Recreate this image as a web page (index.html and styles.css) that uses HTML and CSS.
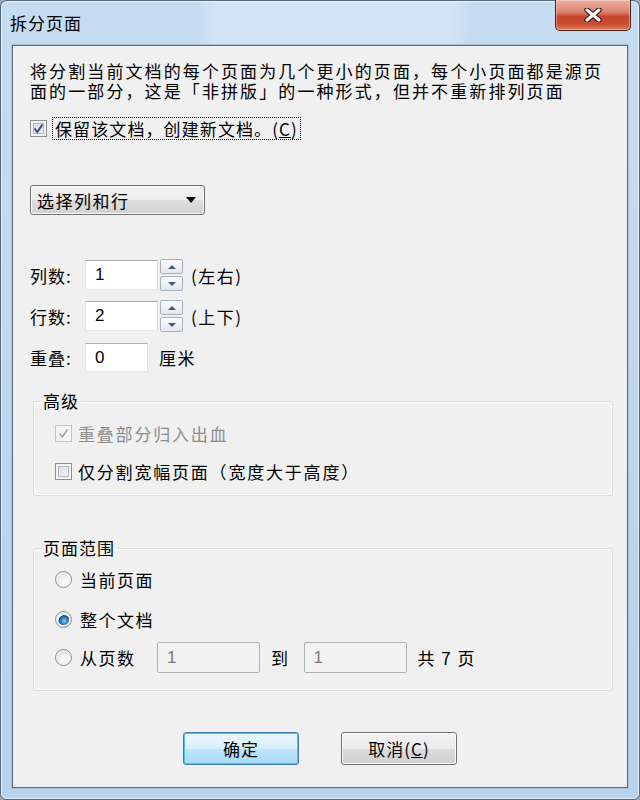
FILE: index.html
```html
<!DOCTYPE html>
<html lang="zh-CN">
<head>
    <meta charset="UTF-8">
    <meta name="viewport" content="width=device-width, initial-scale=1.0">
    <title>拆分页面</title>
    <link rel="stylesheet" href="styles.css">
</head>
<body>

<div class="window">

    <!-- Title bar -->
    <div class="titlebar">
        <span class="title">拆分页面</span>
        <button class="close" title="关闭">
            <svg width="20" height="14" viewBox="0 0 20 14">
                <path d="M4 2 L16 12 M16 2 L4 12" stroke="#3b1d14" stroke-width="5.5" stroke-linecap="round"/>
                <path d="M4 2 L16 12 M16 2 L4 12" stroke="#ffffff" stroke-width="3" stroke-linecap="round"/>
            </svg>
        </button>
    </div>

    <div class="frame">
        <div class="client">

            <p class="intro">将分割当前文档的每个页面为几个更小的页面，每个小页面都是源页<br>面的一部分，这是「非拼版」的一种形式，但并不重新排列页面</p>

            <label class="check keep">
                <span class="box"><svg width="11" height="11" viewBox="0 0 11 11"><path d="M1.5 5.5 L4.3 9 L9.5 1.5" fill="none" stroke="#2d4c9e" stroke-width="2"/></svg></span>
                <span class="focus">保留该文档，创建新文档。(<u>C</u>)</span>
            </label>

            <div class="select">选择列和行<span class="arrow"></span></div>

            <!-- Columns / rows / overlap -->
            <div class="row row-cols">
                <span class="lbl">列数:</span>
                <span class="input w-spin">1</span>
                <span class="spin"><span class="up"></span><span class="down"></span></span>
                <span class="unit">(左右)</span>
            </div>
            <div class="row row-rows">
                <span class="lbl">行数:</span>
                <span class="input w-spin">2</span>
                <span class="spin"><span class="up"></span><span class="down"></span></span>
                <span class="unit">(上下)</span>
            </div>
            <div class="row row-overlap">
                <span class="lbl">重叠:</span>
                <span class="input w-small">0</span>
                <span class="unit wide">厘米</span>
            </div>

            <fieldset class="group adv">
                <legend>高级</legend>
                <label class="check disabled">
                    <span class="box"><svg width="11" height="11" viewBox="0 0 11 11"><path d="M1.5 5.5 L4.3 9 L9.5 1.5" fill="none" stroke="#a0a0a0" stroke-width="1.4"/></svg></span>
                    <span>重叠部分归入出血</span>
                </label>
                <label class="check second">
                    <span class="box"></span>
                    <span>仅分割宽幅页面（宽度大于高度）</span>
                </label>
            </fieldset>

            <fieldset class="group range">
                <legend>页面范围</legend>
                <label class="radio">
                    <span class="dot"></span>
                    <span>当前页面</span>
                </label>
                <label class="radio on">
                    <span class="dot"></span>
                    <span>整个文档</span>
                </label>
                <label class="radio pages">
                    <span class="dot"></span>
                    <span class="from">从页数</span>
                    <span class="input off">1</span>
                    <span class="to">到</span>
                    <span class="input off">1</span>
                    <span class="total">共 7 页</span>
                </label>
            </fieldset>

            <div class="buttons">
                <button class="btn default">确定</button>
                <button class="btn">取消(<u>C</u>)</button>
            </div>

        </div>
    </div>
</div>

</body>
</html>
```

FILE: styles.css
```css
* { box-sizing: border-box; }

html, body { margin: 0; padding: 0; background: #9aa7b3; }

body {
    font-family: "Noto Sans CJK SC", "Noto Sans", sans-serif;
    font-size: 17px;
    color: #000;
}

/* Window frame */
.window {
    width: 640px;
    height: 800px;
    display: flex;
    flex-direction: column;
    border: 1px solid #56697d;
    border-radius: 7px 7px 6px 6px;
    background: linear-gradient(#c6dcf1, #bcd6ef 60%, #b7d3ee);
    box-shadow: inset 0 0 0 1px rgba(255, 255, 255, 0.6);
}

.titlebar {
    height: 44px;
    display: flex;
    justify-content: space-between;
    align-items: flex-start;
    padding: 0 8px 0 9px;
    background: linear-gradient(90deg, transparent 195px, rgba(255, 255, 255, 0.22) 215px, rgba(255, 255, 255, 0.22) 450px, transparent 470px);
}

.title {
    margin-top: 9px;
    font-size: 17px;
    letter-spacing: 1px;
    color: #000;
}

.close {
    width: 76px;
    height: 31px;
    margin-top: -1px;
    padding: 0;
    border: 1px solid #4a1f16;
    border-top: none;
    border-radius: 0 0 5px 5px;
    background: linear-gradient(#eab0a2 0%, #dc8471 40%, #c7462e 55%, #c84b31 80%, #dd7f63 100%);
    box-shadow: inset 0 0 0 1px rgba(255, 230, 220, 0.45);
    display: flex;
    align-items: center;
    justify-content: center;
}

.frame {
    flex: 1;
    display: flex;
    padding: 0 11px 11px 11px;
}

.client {
    flex: 1;
    border: 1px solid #5f6c7a;
    box-shadow: 0 0 0 1px #a9c0d6;
    background: #f0f0f0;
    padding: 15px 0 0 17px;
}

.intro {
    margin: 0;
    line-height: 20px;
    letter-spacing: 2.1px;
    white-space: nowrap;
}

/* Checkboxes */
.check {
    display: flex;
    align-items: center;
    height: 22px;
    gap: 6px;
    letter-spacing: 1.8px;
}

.check.keep { margin-top: 16px; letter-spacing: 1.1px; }

.box {
    width: 17px;
    height: 17px;
    flex: none;
    border: 1px solid #8e8f8f;
    background: linear-gradient(135deg, #d5d9de, #f8f8f8);
    box-shadow: inset 0 0 0 2px #f4f4f4, inset 0 0 0 3px #b3b8be;
    display: flex;
    align-items: center;
    justify-content: center;
}

.focus {
    outline: 1px dotted #000;
    padding: 0 2px;
    line-height: 21px;
}

.check.disabled { color: #8c8c8c; }
.check.disabled .box { border-color: #c4c4c4; background: #f4f4f4; box-shadow: none; }

/* Dropdown */
.select {
    margin-top: 46px;
    width: 175px;
    height: 30px;
    border: 1px solid #707070;
    border-radius: 3px;
    background: linear-gradient(#f3f3f3, #ececec 50%, #dedede 51%, #d2d2d2);
    box-shadow: inset 0 0 0 1px #fbfbfb;
    display: flex;
    align-items: center;
    justify-content: space-between;
    padding: 0 8px 0 6px;
    letter-spacing: 1.5px;
}

.arrow {
    width: 0;
    height: 0;
    border-left: 5px solid transparent;
    border-right: 5px solid transparent;
    border-top: 6px solid #000;
}

/* Spin rows */
.row {
    display: flex;
    align-items: center;
    height: 30px;
}

.row-cols { margin-top: 45px; }
.row-rows { margin-top: 11px; }
.row-overlap { margin-top: 12px; height: 29px; }

.lbl { width: 55px; letter-spacing: 1px; }

.input {
    height: 100%;
    background: #fff;
    border: 1px solid #dbdfe6;
    border-top-color: #abadb3;
    border-left-color: #e2e3ea;
    border-bottom-color: #e3e9ef;
    padding-left: 9px;
    display: flex;
    align-items: center;
    font-family: "Liberation Sans", Arial, sans-serif;
    font-size: 17px;
}

.w-spin { width: 73px; }
.w-small { width: 63px; }

.spin {
    margin-left: 2px;
    display: flex;
    flex-direction: column;
    gap: 2px;
}

.spin span {
    width: 23px;
    height: 15px;
    border: 1px solid #a7b1bb;
    border-radius: 2px;
    background: linear-gradient(#fbfbfb, #e4e7ea);
    display: flex;
    align-items: center;
    justify-content: center;
}

.spin .up::after,
.spin .down::after {
    content: "";
    border-left: 4px solid transparent;
    border-right: 4px solid transparent;
}

.spin .up::after { border-bottom: 4px solid #3f5a86; }
.spin .down::after { border-top: 4px solid #3f5a86; }

.unit { margin-left: 8px; letter-spacing: 1.5px; }
.unit.wide { margin-left: 11px; }

/* Group boxes */
.group {
    margin: 19px 14px 0 3px;
    padding: 11px 0 13px 21px;
    border: 1px solid #d5dfe5;
    border-radius: 3px;
    box-shadow: inset 0 0 0 1px #fafafa;
}

.group legend {
    margin-left: -14px;
    padding: 0 2px;
    line-height: 20px;
    letter-spacing: 1px;
}

.check.second { margin-top: 16px; }

.range { margin-top: 42px; padding: 10px 0 17px 21px; }

/* Radios */
.radio {
    display: flex;
    align-items: center;
    height: 22px;
    gap: 8px;
    letter-spacing: 1.5px;
}

.radio + .radio { margin-top: 18px; }
.radio.pages { height: 31px; margin-top: 12px; }

.dot {
    width: 17px;
    height: 17px;
    flex: none;
    border-radius: 50%;
    border: 1px solid #8e8f8f;
    background: radial-gradient(circle at 60% 65%, #f7f7f7 30%, #d2d6da 75%);
    box-shadow: inset 0 0 0 2px #f3f3f3;
}

.radio.on .dot {
    background: radial-gradient(circle at 55% 60%, #8bd0f4 0, #2a79c1 30%, #184d8d 45%, #f3f3f3 50%, #e2e4e6 80%);
}

.from { width: 69px; }

.input.off {
    width: 103px;
    background: #f2f2f2;
    border: 1px solid #adb2b5;
    border-radius: 2px;
    color: #7a7a7a;
}

.to { margin: 0 6px 0 3px; }
.total { margin-left: 3px; }

/* Dialog buttons */
.buttons {
    margin-top: 41px;
    padding-left: 153px;
    display: flex;
    gap: 42px;
}

.btn {
    width: 116px;
    height: 33px;
    border: 1px solid #707070;
    border-radius: 3px;
    background: linear-gradient(#f2f2f2, #ebebeb 50%, #dddddd 51%, #cfcfcf);
    box-shadow: inset 0 0 0 1px #fcfcfc;
    font-family: inherit;
    font-size: 17px;
    letter-spacing: 1px;
    color: #000;
    padding: 0;
}

.btn.default {
    border-color: #3c7fb1;
    background: linear-gradient(#eaf6fd, #d9f0fc 50%, #bee6fd 51%, #a7d9f5);
    box-shadow: inset 0 0 0 1px #48c1f0;
}
```
